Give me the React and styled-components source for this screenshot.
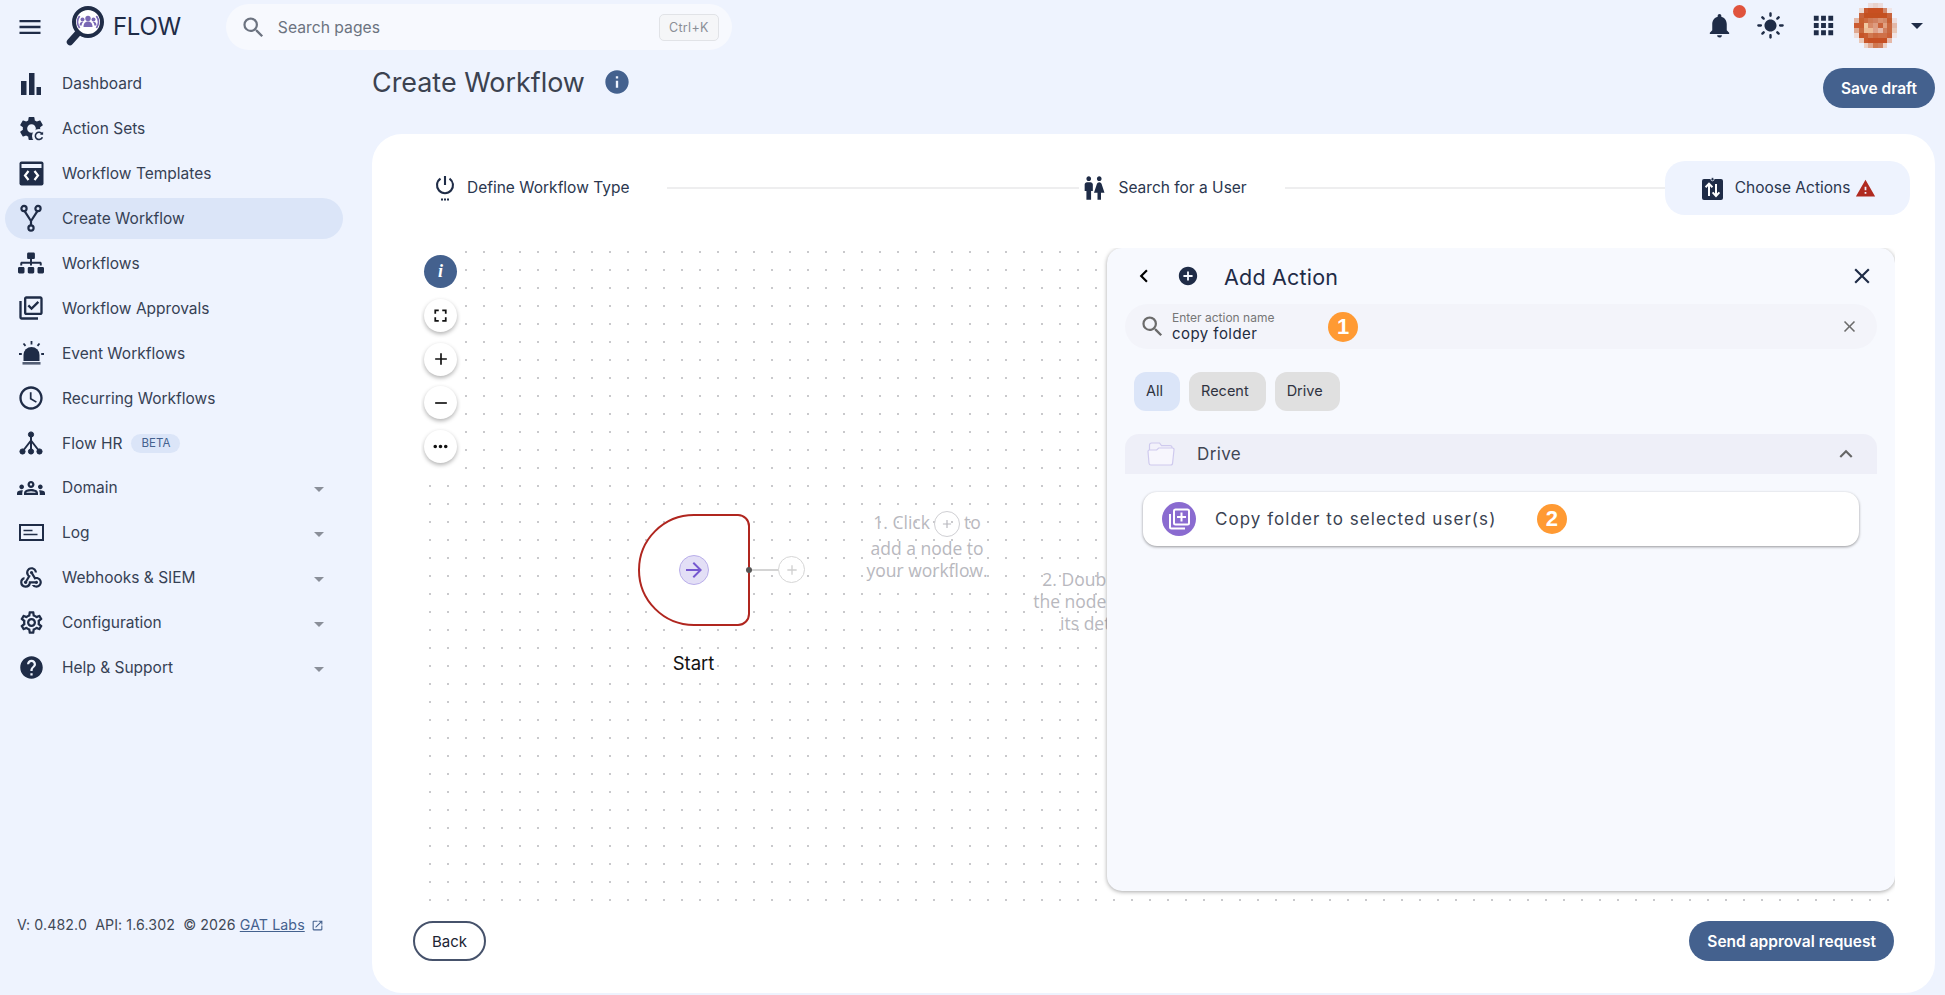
import styled, { createGlobalStyle } from 'styled-components'
import {
	MdAdd,
	MdAddCircle,
	MdApps,
	MdArrowForward,
	MdChevronLeft,
	MdClose,
	MdExpandLess,
	MdFullscreen,
	MdHelp,
	MdInfo,
	MdLightMode,
	MdMenu,
	MdMoreHoriz,
	MdNotifications,
	MdOpenInNew,
	MdOutlineAccessTime,
	MdOutlineGroups,
	MdOutlineLibraryAddCheck,
	MdOutlineSettings,
	MdOutlineWebhook,
	MdRemove,
	MdSearch,
	MdWarning,
	MdWc,
} from 'react-icons/md'
import { FaSitemap } from 'react-icons/fa'

const NAVY = '#1f2c47'
const BLUE = '#44618e'
const TEXT = '#364154'

const GlobalStyle = createGlobalStyle`
	html, body {
		margin: 0;
		padding: 0;
		background: #eef3fe;
	}
	body {
		font-family: 'Inter', 'Liberation Sans', sans-serif;
		color: ${TEXT};
	}
	* {
		box-sizing: border-box;
	}
`

const Page = styled.div`
	width: 1945px;
	height: 995px;
	overflow: hidden;
	display: flex;
	flex-direction: column;
	background: #eef3fe;
`

const Header = styled.header`
	height: 52px;
	flex: none;
	display: flex;
	align-items: center;
	padding: 2px 0 0 16px;
`

const MenuButton = styled.div`
	display: flex;
	color: ${NAVY};
`

const Logo = styled.div`
	display: flex;
	align-items: center;
	margin-left: 22px;
	color: ${NAVY};
	font-size: 24px;
	line-height: 1;
	letter-spacing: -0.3px;

	& svg {
		margin-right: 7px;
		margin-top: -2px;
	}
`

const SearchBar = styled.div`
	width: 506px;
	height: 46px;
	margin: 0 0 0 45px;
	padding: 0 13px 0 14px;
	border-radius: 23px;
	background: #f7f9fe;
	display: flex;
	align-items: center;
	color: #6c7380;
	font-size: 15.7px;

	& > svg {
		margin-right: 11px;
	}
`

const Kbd = styled.span`
	margin-left: auto;
	width: 60px;
	height: 27px;
	border: 1px solid #e1e3e7;
	border-radius: 5px;
	background: #f5f6f8;
	color: #8a8e96;
	font-size: 12.5px;
	letter-spacing: 0.3px;
	display: flex;
	align-items: center;
	justify-content: center;
`

const HeaderActions = styled.div`
	margin-left: auto;
	margin-top: -3px;
	display: flex;
	align-items: center;
	color: ${NAVY};
	padding-right: 22px;
`

const Bell = styled.div`
	position: relative;
	display: flex;
	width: 29px;
	margin-right: 22px;

	&::after {
		content: '';
		position: absolute;
		top: -6px;
		right: -12px;
		width: 13px;
		height: 13px;
		border-radius: 50%;
		background: #e0533d;
	}
`

const HeaderIcon = styled.div`
	display: flex;
	margin-right: ${(p) => p.$gap}px;
`

const Caret = styled.span`
	width: 0;
	height: 0;
	border-left: ${(p) => p.$size}px solid transparent;
	border-right: ${(p) => p.$size}px solid transparent;
	border-top: ${(p) => p.$size}px solid ${(p) => p.$color};
	margin-left: ${(p) => p.$left || 0}px;
`

const Body = styled.div`
	flex: 1;
	display: flex;
	min-height: 0;
`

const Sidebar = styled.aside`
	width: 372px;
	flex: none;
	display: flex;
	flex-direction: column;
	padding: 11px 29px 61px 5px;
`

const Nav = styled.nav`
	display: flex;
	flex-direction: column;
	gap: 3.95px;
`

const NavItem = styled.div`
	height: 41px;
	display: flex;
	align-items: center;
	padding: 0 19px 0 13px;
	border-radius: 21px;
	font-size: 15.5px;
	background: ${(p) => (p.$active ? '#dbe5f8' : 'transparent')};
`

const NavIcon = styled.span`
	width: 26px;
	height: 26px;
	margin-right: 18px;
	flex: none;
	display: flex;
	align-items: center;
	justify-content: center;
	color: ${NAVY};

	& svg {
		flex: none;
	}
`

const BetaTag = styled.span`
	margin-left: 9px;
	height: 19px;
	width: 49px;
	border-radius: 10px;
	background: #dbe5f8;
	color: ${BLUE};
	font-size: 11.5px;
	display: flex;
	align-items: center;
	justify-content: center;
`

const NavCaret = styled(Caret)`
	margin-left: auto;
	margin-top: 4px;
`

const VersionLine = styled.div`
	margin-top: auto;
	padding-left: 12px;
	font-size: 14.2px;
	letter-spacing: 0.1px;
	line-height: 18px;
	white-space: pre;
	display: flex;
	align-items: center;
	color: #3f4856;
`

const GatLink = styled.a`
	color: ${BLUE};
	text-decoration: underline;
	margin-left: 4px;
`

const LinkIcon = styled.span`
	display: flex;
	color: ${BLUE};
	margin-left: 6px;
`

const Main = styled.main`
	flex: 1;
	min-width: 0;
	display: flex;
	flex-direction: column;
	padding: 0 10px 2px 0;
`

const TitleRow = styled.div`
	height: 82px;
	flex: none;
	display: flex;
	align-items: flex-start;
	justify-content: space-between;
`

const TitleGroup = styled.div`
	display: flex;
	align-items: center;
	height: 38px;
	margin-top: 11px;
	color: ${BLUE};
`

const Title = styled.h1`
	margin: 0 18px 0 0;
	font-size: 26.9px;
	font-weight: 400;
	color: #3b4250;
`

const PrimaryButton = styled.button`
	height: ${(p) => p.$height}px;
	padding: 0 ${(p) => p.$pad}px;
	border: none;
	border-radius: 20px;
	background: ${BLUE};
	color: #fff;
	font-family: inherit;
	font-size: 15.5px;
	font-weight: 600;
	margin-top: ${(p) => p.$top || 0}px;
`

const Card = styled.section`
	flex: 1;
	min-height: 0;
	background: #fff;
	border-radius: 30px;
	display: flex;
	flex-direction: column;
	padding: 27px 25px 0 49px;
`

const Stepper = styled.div`
	display: flex;
	align-items: center;
	height: 54px;
	flex: none;
	font-size: 15.5px;
	color: #2b374f;
	padding-left: 14px;
`

const Step = styled.div`
	display: flex;
	align-items: center;
	flex: none;
	white-space: nowrap;
	color: ${NAVY};

	& > span {
		color: #2b374f;
		margin-top: -1px;
		margin-left: ${(p) => p.$gap || 12}px;
	}
`

const StepLine = styled.div`
	width: ${(p) => p.$width}px;
	height: 2px;
	background: #eeeeef;
	flex: none;
	margin-top: -1px;
	margin-left: ${(p) => p.$left}px;
	margin-right: ${(p) => p.$right}px;
`

const ActiveStep = styled(Step)`
	width: 245px;
	height: 54px;
	border-radius: 20px;
	background: #eef3fe;
	padding-left: 37px;

	& > span {
		margin: -1px 5px 0 12px;
	}
`

const Canvas = styled.div`
	position: relative;
	height: 658px;
	flex: none;
	margin: 33px 15px 0 0;
	overflow: hidden;
	background-color: #fff;
	background-image: radial-gradient(circle, #c9c9cc 0.8px, transparent 1.1px);
	background-size: 18px 18px;
	background-position: 0 -5px;
`

const CanvasTools = styled.div`
	position: absolute;
	left: 0;
	top: 0;
	width: 42px;
	height: 229px;
	padding: 7px 0 0 3px;
	background: #fff;
	display: flex;
	flex-direction: column;
	gap: 10.75px;
`

const ToolButton = styled.div`
	width: 33px;
	height: 33px;
	border-radius: 50%;
	flex: none;
	display: flex;
	align-items: center;
	justify-content: center;
	color: ${(p) => (p.$primary ? '#fff' : '#111')};
	background: ${(p) => (p.$primary ? BLUE : '#fff')};
	box-shadow: ${(p) => (p.$primary ? 'none' : '0 2px 4px rgba(0, 0, 0, 0.3)')};
	font-family: 'Liberation Serif', serif;
	font-style: italic;
	font-weight: 700;
	font-size: 18px;
`

const StartNode = styled.div`
	position: absolute;
	left: 217px;
	top: 266px;
	width: 112px;
	height: 112px;
	background: #fff;
	border: 2px solid #b0261f;
	border-radius: 56px 12px 12px 56px;
	display: flex;
	align-items: center;
	justify-content: center;
	padding-right: 1px;
`

const StartIcon = styled.div`
	width: 30px;
	height: 30px;
	border-radius: 50%;
	background: #e3dff6;
	border: 1px solid #b9aeea;
	color: #7658d0;
	display: flex;
	align-items: center;
	justify-content: center;
`

const Handle = styled.div`
	position: absolute;
	left: 325px;
	top: 319px;
	width: 6px;
	height: 6px;
	border-radius: 50%;
	background: #555;
`

const Connector = styled.div`
	position: absolute;
	left: 329px;
	top: 321px;
	width: 29px;
	height: 2px;
	background: #d4d4d4;
`

const AddNode = styled.div`
	position: absolute;
	left: ${(p) => p.$left}px;
	top: ${(p) => p.$top}px;
	width: 27px;
	height: 27px;
	border: 1px solid #d6d6d6;
	border-radius: 50%;
	background: #fff;
	color: #cfcfcf;
	display: flex;
	align-items: center;
	justify-content: center;
`

const StartLabel = styled.div`
	position: absolute;
	left: 217px;
	top: 404px;
	width: 111px;
	text-align: center;
	font-size: 18.5px;
	line-height: 22px;
	color: #111;
`

const Hint = styled.div`
	position: absolute;
	left: ${(p) => p.$left}px;
	top: ${(p) => p.$top}px;
	width: ${(p) => p.$width}px;
	text-align: center;
	font-family: 'Open Sans', sans-serif;
	font-size: 17.5px;
	line-height: 22px;
	color: #b8b8be;
	white-space: nowrap;
`

const InlinePlus = styled.span`
	display: inline-flex;
	width: 26px;
	height: 26px;
	margin: 0 4px;
	border: 1px solid #cfcfd3;
	border-radius: 50%;
	align-items: center;
	justify-content: center;
	vertical-align: middle;
`

const Panel = styled.div`
	position: absolute;
	right: 0;
	top: 0;
	width: 788px;
	height: 643px;
	border-radius: 15px;
	background: #f7f9fe;
	box-shadow: 0 1px 4px rgba(0, 0, 0, 0.35);
`

const PanelHeader = styled.div`
	height: 56px;
	display: flex;
	align-items: center;
	padding: 0 20px 0 24px;
	color: ${NAVY};
	font-size: 21.5px;
`

const PanelBack = styled.span`
	display: flex;
	color: #000;
	margin-right: 20px;
`

const PanelTitle = styled.span`
	margin-left: 25px;
	padding-top: 2px;
	letter-spacing: 0.2px;
`

const PanelClose = styled.span`
	display: flex;
	margin-left: auto;
`

const ActionSearch = styled.div`
	height: 45px;
	margin: 0 18px;
	padding: 0 18px 0 14px;
	border-radius: 23px;
	background: #f3f4fa;
	display: flex;
	align-items: center;
	color: #6b6b6b;
`

const SearchField = styled.div`
	width: 156px;
	margin: -1px 0 0 6px;
`

const FieldLabel = styled.div`
	font-size: 12px;
	line-height: 15px;
	color: #767676;
`

const FieldValue = styled.div`
	font-size: 15px;
	line-height: 18px;
	letter-spacing: 0.45px;
	color: #232c3f;
`

const Badge = styled.span`
	width: 30px;
	height: 30px;
	flex: none;
	border-radius: 50%;
	background: #ff9a33;
	color: #fff;
	font-family: 'Liberation Sans', sans-serif;
	font-weight: 700;
	font-size: 22px;
	display: flex;
	align-items: center;
	justify-content: center;
	margin-left: ${(p) => p.$left || 0}px;
`

const ClearIcon = styled.span`
	display: flex;
	margin-left: auto;
`

const Chips = styled.div`
	display: flex;
	gap: 9px;
	margin: 23px 0 0 27px;
`

const Chip = styled.span`
	height: 39px;
	padding: 0 17px 2px 12px;
	border-radius: 12px;
	background: ${(p) => (p.$active ? '#dbe5f8' : '#e0e0e0')};
	font-size: 14.5px;
	color: #2f3340;
	display: flex;
	align-items: center;
`

const GroupHeader = styled.div`
	height: 40px;
	margin: 23px 18px 0;
	padding: 0 18px 0 22px;
	border-radius: 14px 14px 0 0;
	background: #eeeff8;
	display: flex;
	align-items: center;
	font-size: 17px;
	letter-spacing: 0.4px;
	color: #3f4654;

	& > svg:first-child {
		margin-right: 22px;
	}
`

const GroupToggle = styled.span`
	display: flex;
	margin-left: auto;
	color: #666;
`

const ActionItem = styled.div`
	height: 54px;
	margin: 18px 36px 0;
	padding-left: 19px;
	border-radius: 14px;
	background: #fff;
	box-shadow: 0 1px 3px rgba(0, 0, 0, 0.4);
	display: flex;
	align-items: center;
	font-size: 17px;
	letter-spacing: 1.05px;
	color: #3a4352;
`

const ActionIcon = styled.span`
	width: 34px;
	height: 34px;
	margin-right: 19px;
	border-radius: 50%;
	flex: none;
	background: #8a6bd0;
	display: flex;
	align-items: center;
	justify-content: center;
`

const BottomBar = styled.div`
	display: flex;
	align-items: center;
	justify-content: space-between;
	margin: 15px 16px 0 -8px;
`

const BackButton = styled.button`
	width: 73px;
	height: 40px;
	border: 2px solid #46526b;
	border-radius: 20px;
	background: #fff;
	color: #1c2433;
	font-family: inherit;
	font-size: 15px;
`

const BarsIcon = () => (
	<svg width='22' height='24' viewBox='0 0 22 24' fill='currentColor'>
		<rect x='1' y='9' width='5.5' height='14' />
		<rect x='9' y='1' width='5.5' height='22' />
		<rect x='16.5' y='15' width='4.5' height='8' />
	</svg>
)

const GearRefreshIcon = () => (
	<svg width='29' height='29' viewBox='0 0 24 24' fill='currentColor'>
		<path d='M19.14 12.94c.04-.3.06-.61.06-.94 0-.32-.02-.64-.07-.94l2.03-1.58c.18-.14.23-.41.12-.61l-1.92-3.32c-.12-.22-.37-.29-.59-.22l-2.39.96c-.5-.38-1.03-.7-1.62-.94l-.36-2.54c-.04-.24-.24-.41-.48-.41h-3.84c-.24 0-.43.17-.47.41l-.36 2.54c-.59.24-1.13.57-1.62.94l-2.39-.96c-.22-.08-.47 0-.59.22L2.74 8.87c-.12.21-.08.47.12.61l2.03 1.58c-.05.3-.09.63-.09.94s.02.64.07.94l-2.03 1.58c-.18.14-.23.41-.12.61l1.92 3.32c.12.22.37.29.59.22l2.39-.96c.5.38 1.03.7 1.62.94l.36 2.54c.05.24.24.41.48.41h3.84c.24 0 .44-.17.47-.41l.36-2.54c.59-.24 1.13-.56 1.62-.94l2.39.96c.22.08.47 0 .59-.22l1.92-3.32c.12-.22.07-.47-.12-.61l-2.01-1.58zM12 15.6c-1.98 0-3.6-1.62-3.6-3.6s1.62-3.6 3.6-3.6 3.6 1.62 3.6 3.6-1.62 3.6-3.6 3.6z' />
		<circle cx='18.2' cy='18.2' r='5.8' fill='#eef3fe' />
		<path d='M21 19.2a3 3 0 1 1-.3-2.7' fill='none' stroke='currentColor' strokeWidth='1.3' />
		<path d='M21.6 14.6v2.6H19z' />
	</svg>
)

const TemplateIcon = () => (
	<svg width='25' height='25' viewBox='0 0 25 25'>
		<rect x='0.5' y='0.5' width='24' height='24' rx='2' fill={NAVY} />
		<rect x='2.5' y='3' width='20' height='4' fill='#eef3fe' />
		<path d='M9.5 10L6 14.5l3.5 4.5M15.5 10l3.5 4.5-3.5 4.5' fill='none' stroke='#fff' strokeWidth='2.2' />
	</svg>
)

const ForkIcon = () => (
	<svg width='22' height='28' viewBox='0 0 22 28' fill='none' stroke='currentColor' strokeWidth='2.2'>
		<circle cx='4' cy='4.5' r='2.6' />
		<circle cx='18' cy='4.5' r='2.6' />
		<circle cx='11' cy='24' r='2.6' />
		<path d='M4.6 7.2L11 17l6.4-9.8M11 17v4.4' />
	</svg>
)

const SirenIcon = () => (
	<svg width='25' height='25' viewBox='0 0 25 25' fill='currentColor'>
		<path d='M4.5 20v-6a8 8 0 0 1 16 0v6z' />
		<rect x='3.5' y='21' width='18' height='2.6' opacity='0.75' />
		<path d='M12.5 0v3.6M4.5 2.5l2 2.4M20.5 2.5l-2 2.4M0 13h2.8M22.2 13H25' stroke='currentColor' strokeWidth='1.8' />
	</svg>
)

const TreeIcon = () => (
	<svg width='24' height='24' viewBox='0 0 24 24' fill='currentColor' stroke='currentColor'>
		<circle cx='12' cy='3.5' r='2.6' />
		<circle cx='3.5' cy='20.5' r='2.6' />
		<circle cx='12' cy='20.5' r='2.6' />
		<circle cx='20.5' cy='20.5' r='2.6' />
		<path d='M12 4v16M12 9.5L3.5 20.5M12 9.5l8.5 11' fill='none' strokeWidth='2' />
	</svg>
)

const LogLineIcon = () => (
	<svg width='25' height='17' viewBox='0 0 25 17' fill='none' stroke='currentColor'>
		<rect x='1' y='1' width='23' height='15' strokeWidth='2' />
		<path d='M4.5 6.5h9M4.5 10.5h14' strokeWidth='1.4' />
	</svg>
)

const PowerDotsIcon = () => (
	<svg width='20' height='26' viewBox='0 0 20 26' fill='none' stroke='currentColor' strokeWidth='2.1'>
		<path d='M10 1v9' />
		<path d='M5.5 3.6a8 8 0 1 0 9 0' />
		<path d='M6 24.5h2M9 24.5h2M12 24.5h2' strokeWidth='2' />
	</svg>
)

const BoardSwapIcon = () => (
	<svg width='21' height='23' viewBox='0 0 21 23'>
		<rect x='0' y='2' width='21' height='21' rx='2' fill={NAVY} />
		<circle cx='10.5' cy='2.2' r='1.6' fill={NAVY} stroke='#eef3fe' strokeWidth='0.8' />
		<path d='M7 19V7M3.6 10.2L7 6.6l3.4 3.6M14 7v12M10.6 15.4l3.4 3.6 3.4-3.6' fill='none' stroke='#fff' strokeWidth='2' />
	</svg>
)

const FolderIcon = () => (
	<svg width='28' height='24' viewBox='0 0 28 24' fill='none' stroke='#cfcaee' strokeWidth='1.2'>
		<path d='M2.5 8V3a2 2 0 0 1 2-2h8l2 2.6h8.5a2 2 0 0 1 2 2V8' fill='#f3f2fb' />
		<path d='M1 9.5a1.5 1.5 0 0 1 1.5-1.5h7.2l2-2H25.5a1.5 1.5 0 0 1 1.5 1.7L25.6 21a2 2 0 0 1-2 2H4a2 2 0 0 1-2-1.8z' fill='#f7f6fd' />
	</svg>
)

const CopyPlusIcon = () => (
	<svg width='24' height='24' viewBox='0 0 24 24' fill='none' stroke='#fff' strokeWidth='2'>
		<rect x='7' y='2.5' width='15' height='15' rx='1.5' />
		<path d='M3 7v13a1.5 1.5 0 0 0 1.5 1.5H18' />
		<path d='M14.5 5.5v9M10 10h9' />
	</svg>
)

const LogoIcon = () => (
	<svg width='40' height='40' viewBox='0 0 40 40'>
		<path d='M4 36l9-10' stroke={NAVY} strokeWidth='6.5' strokeLinecap='round' />
		<circle cx='22' cy='16' r='14' fill='#fff' stroke={NAVY} strokeWidth='4' />
		<g fill='#7a68b4'>
			<circle cx='22' cy='12.5' r='2.7' />
			<circle cx='16.5' cy='13.5' r='2' />
			<circle cx='27.5' cy='13.5' r='2' />
			<path d='M17.5 21c0-4 2-5.5 4.5-5.5s4.5 1.5 4.5 5.5z' />
			<path d='M13.5 19.5c0-2.5 1-3.8 3-3.8l.7.4c-1 1-1.5 2-1.5 3.4zM30.5 19.5c0-2.5-1-3.8-3-3.8l-.7.4c1 1 1.5 2 1.5 3.4z' />
		</g>
		<path d='M13.6 10a10 10 0 0 0 0 12M30.4 10a10 10 0 0 1 0 12' fill='none' stroke='#7a68b4' strokeWidth='1.8' />
	</svg>
)

const AVATAR_PIXELS = [
	['', '', '', '#ecdcdc', '#e9d2cc', '#ecdcdc', '', '', ''],
	['', '#ecd8d0', '#c85a30', '#c85022', '#c85022', '#c85022', '#d0886c', '#f0e4e4', ''],
	['', '#c8643c', '#c45020', '#c45020', '#c45020', '#c45020', '#c45020', '#c8643c', ''],
	['#e3b8a8', '#c8602f', '#cc6a40', '#cf7a55', '#d08060', '#d89070', '#d08868', '#c55c30', '#ecdcdc'],
	['#cc5a30', '#c85c30', '#f0c8a0', '#d88a68', '#dd9c80', '#c9623a', '#e0a080', '#c9683f', '#e3b8a8'],
	['#e0a890', '#c86a40', '#ecbc98', '#ecbc98', '#dfa088', '#e5b8a8', '#d08060', '#c8683f', '#e8c8b8'],
	['#eedcd8', '#c55428', '#c85c30', '#d07850', '#cc6a40', '#cf7048', '#cf7048', '#c96038', '#f0e4e4'],
	['', '#eac8b8', '#c8572a', '#c65024', '#c65024', '#c65024', '#c65024', '#e5b8a8', ''],
	['', '', '#ecd0c4', '#e0a890', '#d07850', '#d08060', '#ecd0c4', '', ''],
]

const Avatar = () => (
	<svg width='43' height='45' viewBox='0 0 9 9' shapeRendering='crispEdges' preserveAspectRatio='none'>
		{AVATAR_PIXELS.flatMap((row, y) =>
			row.map((color, x) =>
				color ? <rect key={`${x}-${y}`} x={x} y={y} width='1' height='1' fill={color} /> : null
			)
		)}
	</svg>
)

const navItems = [
	{ label: 'Dashboard', icon: <BarsIcon /> },
	{ label: 'Action Sets', icon: <GearRefreshIcon /> },
	{ label: 'Workflow Templates', icon: <TemplateIcon /> },
	{ label: 'Create Workflow', icon: <ForkIcon />, active: true },
	{ label: 'Workflows', icon: <FaSitemap size={26} /> },
	{ label: 'Workflow Approvals', icon: <MdOutlineLibraryAddCheck size={28} /> },
	{ label: 'Event Workflows', icon: <SirenIcon /> },
	{ label: 'Recurring Workflows', icon: <MdOutlineAccessTime size={28} /> },
	{ label: 'Flow HR', icon: <TreeIcon />, beta: true },
	{ label: 'Domain', icon: <MdOutlineGroups size={28} />, caret: true },
	{ label: 'Log', icon: <LogLineIcon />, caret: true },
	{ label: 'Webhooks & SIEM', icon: <MdOutlineWebhook size={26} />, caret: true },
	{ label: 'Configuration', icon: <MdOutlineSettings size={27} />, caret: true },
	{ label: 'Help & Support', icon: <MdHelp size={27} />, caret: true },
]

const App = () => (
	<Page>
		<GlobalStyle />
		<Header>
			<MenuButton>
				<MdMenu size={28} />
			</MenuButton>
			<Logo>
				<LogoIcon />
				FLOW
			</Logo>
			<SearchBar>
				<MdSearch size={27} />
				Search pages
				<Kbd>Ctrl+K</Kbd>
			</SearchBar>
			<HeaderActions>
				<Bell>
					<MdNotifications size={29} />
				</Bell>
				<HeaderIcon $gap={24}>
					<MdLightMode size={29} />
				</HeaderIcon>
				<HeaderIcon $gap={16}>
					<MdApps size={29} />
				</HeaderIcon>
				<Avatar />
				<Caret $size={6} $color={NAVY} $left={14} />
			</HeaderActions>
		</Header>
		<Body>
			<Sidebar>
				<Nav>
					{navItems.map((item) => (
						<NavItem key={item.label} $active={item.active}>
							<NavIcon>{item.icon}</NavIcon>
							{item.label}
							{item.beta && <BetaTag>BETA</BetaTag>}
							{item.caret && <NavCaret $size={5.5} $color='#8a8f99' />}
						</NavItem>
					))}
				</Nav>
				<VersionLine>
					V: 0.482.0{'  '}API: 1.6.302{'  '}© 2026
					<GatLink>GAT Labs</GatLink>
					<LinkIcon>
						<MdOpenInNew size={13} />
					</LinkIcon>
				</VersionLine>
			</Sidebar>
			<Main>
				<TitleRow>
					<TitleGroup>
						<Title>Create Workflow</Title>
						<MdInfo size={28} />
					</TitleGroup>
					<PrimaryButton $height={40} $pad={18} $top={16}>
						Save draft
					</PrimaryButton>
				</TitleRow>
				<Card>
					<Stepper>
						<Step>
							<PowerDotsIcon />
							<span>Define Workflow Type</span>
						</Step>
						<StepLine $width={412} $left={38} $right={1} />
						<Step $gap={10}>
							<MdWc size={28} />
							<span>Search for a User</span>
						</Step>
						<StepLine $width={380} $left={38} $right={0} />
						<ActiveStep>
							<BoardSwapIcon />
							<span>Choose Actions</span>
							<MdWarning size={21} color='#b02a20' />
						</ActiveStep>
					</Stepper>
					<Canvas>
						<CanvasTools>
							<ToolButton $primary>i</ToolButton>
							<ToolButton>
								<MdFullscreen size={21} />
							</ToolButton>
							<ToolButton>
								<MdAdd size={20} />
							</ToolButton>
							<ToolButton>
								<MdRemove size={20} />
							</ToolButton>
							<ToolButton>
								<MdMoreHoriz size={21} />
							</ToolButton>
						</CanvasTools>
						<StartNode>
							<StartIcon>
								<MdArrowForward size={24} />
							</StartIcon>
						</StartNode>
						<Connector />
						<Handle />
						<AddNode $left={357} $top={308}>
							<MdAdd size={16} />
						</AddNode>
						<StartLabel>Start</StartLabel>
						<Hint $left={431} $top={263} $width={150}>
							1. Click
							<InlinePlus>
								<MdAdd size={14} />
							</InlinePlus>
							to
							<br />
							add a node to
							<br />
							your workflow.
						</Hint>
						<Hint $left={605} $top={320} $width={150}>
							2. Double click
							<br />
							the node to view
							<br />
							its details.
						</Hint>
						<Panel>
							<PanelHeader>
								<PanelBack>
									<MdChevronLeft size={26} />
								</PanelBack>
								<MdAddCircle size={22} />
								<PanelTitle>Add Action</PanelTitle>
								<PanelClose>
									<MdClose size={26} />
								</PanelClose>
							</PanelHeader>
							<ActionSearch>
								<MdSearch size={27} />
								<SearchField>
									<FieldLabel>Enter action name</FieldLabel>
									<FieldValue>copy folder</FieldValue>
								</SearchField>
								<Badge>1</Badge>
								<ClearIcon>
									<MdClose size={19} />
								</ClearIcon>
							</ActionSearch>
							<Chips>
								<Chip $active>All</Chip>
								<Chip>Recent</Chip>
								<Chip>Drive</Chip>
							</Chips>
							<GroupHeader>
								<FolderIcon />
								Drive
								<GroupToggle>
									<MdExpandLess size={26} />
								</GroupToggle>
							</GroupHeader>
							<ActionItem>
								<ActionIcon>
									<CopyPlusIcon />
								</ActionIcon>
								Copy folder to selected user(s)
								<Badge $left={41}>2</Badge>
							</ActionItem>
						</Panel>
					</Canvas>
					<BottomBar>
						<BackButton>Back</BackButton>
						<PrimaryButton $height={40} $pad={18}>
							Send approval request
						</PrimaryButton>
					</BottomBar>
				</Card>
			</Main>
		</Body>
	</Page>
)

export default App
